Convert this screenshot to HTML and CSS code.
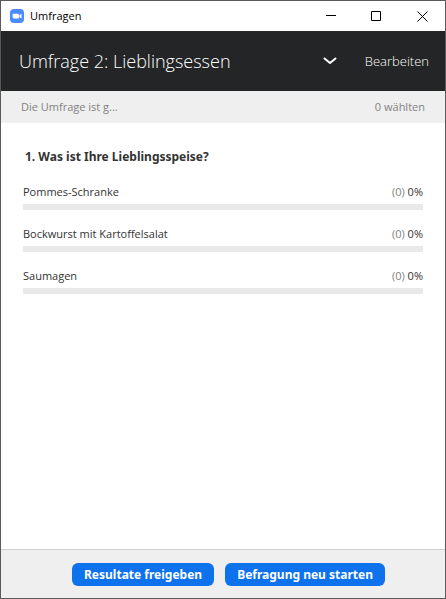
FILE: index.html
```html
<!DOCTYPE html>
<html lang="de">
<head>
    <meta charset="UTF-8">
    <meta name="viewport" content="width=device-width, initial-scale=1.0">
    <title>Umfragen</title>
    <link rel="stylesheet" href="styles.css">
</head>
<body>
    <div class="window">
        <div class="titlebar">
            <svg class="app-icon" viewBox="0 0 14 14" aria-hidden="true">
                <rect width="14" height="14" rx="4" fill="#4a8cff"/>
                <path d="M2.6 4.7h5a1.3 1.3 0 0 1 1.3 1.3v3.4H4A1.4 1.4 0 0 1 2.6 8z" fill="#fff"/>
                <path d="M9.3 6.2l2.2-1.5v4.7L9.3 7.9z" fill="#fff"/>
            </svg>
            <span class="titlebar-text">Umfragen</span>
            <button class="window-btn" aria-label="Minimieren">
                <svg viewBox="0 0 11 11"><path d="M1 4.5h10"/></svg>
            </button>
            <button class="window-btn" aria-label="Maximieren">
                <svg viewBox="0 0 11 11"><path d="M.5 .5h9v9h-9z"/></svg>
            </button>
            <button class="window-btn" aria-label="Schließen">
                <svg viewBox="0 0 11 11"><path d="M.5 .5l10 10M10.5 .5l-10 10"/></svg>
            </button>
        </div>

        <header class="header">
            <h1>Umfrage 2: Lieblingsessen</h1>
            <button class="chevron" aria-label="Umfrage auswählen">
                <svg viewBox="0 0 14 8"><path d="M1.5 1.5L7 6l5.5-4.5"/></svg>
            </button>
            <button class="edit-btn">Bearbeiten</button>
        </header>

        <div class="status">
            <span>Die Umfrage ist g...</span>
            <span>0 wählten</span>
        </div>

        <main class="poll">
            <h2>1. Was ist Ihre Lieblingsspeise?</h2>
            <ul class="answers">
                <li>
                    <div class="answer">
                        <span>Pommes-Schranke</span>
                        <span><span class="votes">(0)</span> 0%</span>
                    </div>
                    <div class="bar"><div class="bar-fill" style="width: 0%"></div></div>
                </li>
                <li>
                    <div class="answer">
                        <span>Bockwurst mit Kartoffelsalat</span>
                        <span><span class="votes">(0)</span> 0%</span>
                    </div>
                    <div class="bar"><div class="bar-fill" style="width: 0%"></div></div>
                </li>
                <li>
                    <div class="answer">
                        <span>Saumagen</span>
                        <span><span class="votes">(0)</span> 0%</span>
                    </div>
                    <div class="bar"><div class="bar-fill" style="width: 0%"></div></div>
                </li>
            </ul>
        </main>

        <footer class="footer">
            <button class="btn">Resultate freigeben</button>
            <button class="btn">Befragung neu starten</button>
        </footer>
    </div>
</body>
</html>
```
FILE: styles.css
```css
* {
    box-sizing: border-box;
}
body {
    margin: 0;
    font-family: "Open Sans", "Noto Sans", sans-serif;
    font-size: 11px;
    line-height: 16px;
    color: #333;
}
button {
    font-family: inherit;
    border: none;
    background: none;
    padding: 0;
    cursor: pointer;
}
.window {
    display: flex;
    flex-direction: column;
    min-height: 100vh;
    border: 1px solid #5a5a5a;
    background: #fff;
}
.titlebar {
    display: flex;
    align-items: center;
    height: 30px;
    padding-left: 9px;
    color: #000;
}
.app-icon {
    width: 14px;
    height: 14px;
    margin-right: 6px;
}
.titlebar-text {
    flex: 1;
}
.window-btn {
    display: flex;
    align-items: center;
    justify-content: center;
    width: 46px;
    height: 30px;
}
.window-btn svg {
    width: 11px;
    height: 11px;
    fill: none;
    stroke: #000;
}
.header {
    display: flex;
    align-items: center;
    height: 60px;
    padding: 0 16px 0 18px;
    background: #232527;
    color: #fff;
}
.header h1 {
    flex: 1;
    margin: 0;
    font-size: 18px;
    font-weight: 300;
    line-height: 24px;
}
.chevron {
    display: flex;
    margin-right: 28px;
}
.chevron svg {
    width: 14px;
    height: 8px;
    fill: none;
    stroke: #fff;
    stroke-width: 2;
    stroke-linecap: round;
    stroke-linejoin: round;
}
.edit-btn {
    font-size: 13px;
    font-weight: 300;
    line-height: 20px;
    color: #fff;
}
.status {
    display: flex;
    align-items: center;
    justify-content: space-between;
    height: 32px;
    padding: 0 20px;
    background: #efefef;
    color: #828282;
}
.poll {
    flex: 1;
    padding: 24px 22px;
}
.poll h2 {
    margin: 0 2px 17px;
    font-family: "Noto Sans", "Open Sans", sans-serif;
    font-size: 12px;
    line-height: 20px;
}
.answers {
    display: grid;
    gap: 16px;
    margin: 0;
    padding: 0;
    list-style: none;
}
.answer {
    display: flex;
    justify-content: space-between;
    margin-bottom: 4px;
}
.votes {
    color: #828282;
}
.bar {
    height: 6px;
    background: #e9e9e9;
}
.bar-fill {
    height: 100%;
    background: #0e72ed;
}
.footer {
    display: flex;
    align-items: center;
    justify-content: center;
    gap: 11px;
    height: 49px;
    padding-left: 11px;
    border-top: 1px solid #d0d0d0;
    background: #efefef;
}
.btn {
    height: 23px;
    padding: 0 12px;
    border-radius: 6px;
    background: #0e72ed;
    color: #fff;
    font-family: "Noto Sans", "Open Sans", sans-serif;
    font-size: 12px;
    font-weight: 700;
    line-height: 23px;
}
```
